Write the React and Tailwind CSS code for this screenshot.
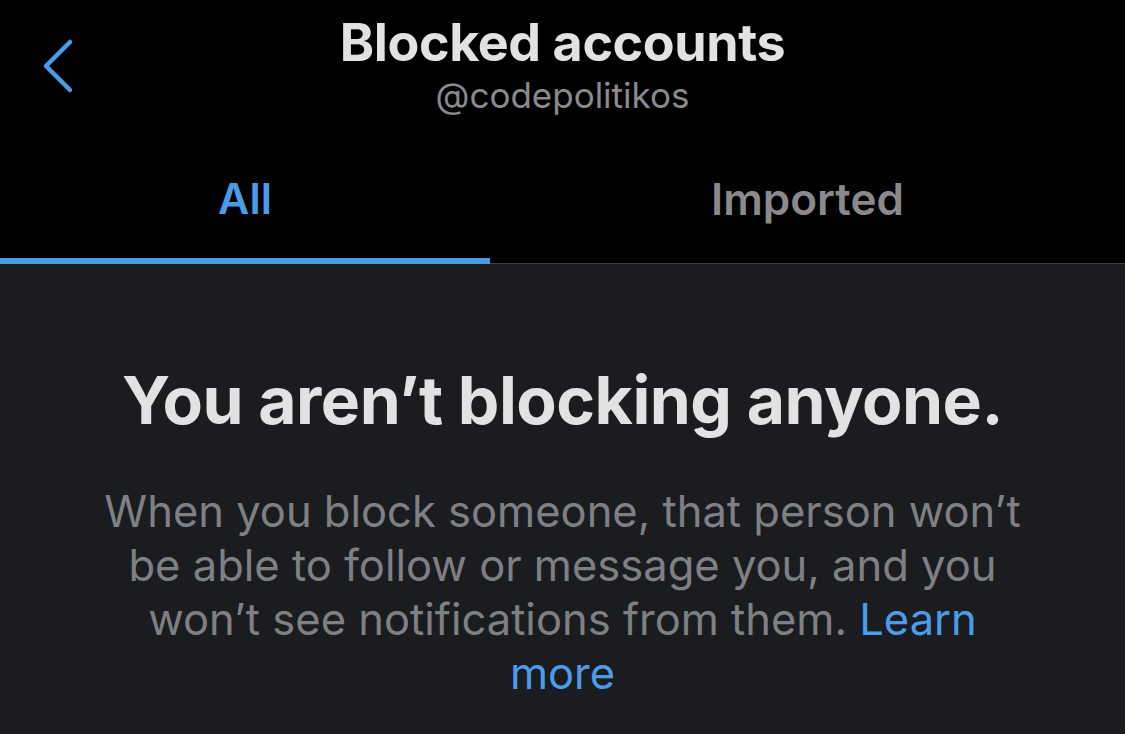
export default function App() {
    return (
        <div className="w-[1125px] h-[734px] overflow-hidden bg-[#1b1c20] font-['Inter','Noto_Sans',sans-serif]">
            {/* header */}
            <div className="bg-black">
                <div className="relative h-[132px] flex flex-col items-center">
                    <button className="absolute left-[40px] top-[38px] text-[#4a9be8]">
                        <svg width="36" height="56" viewBox="0 0 36 56" fill="none">
                            <path d="M30 4 L6 28 L30 52" stroke="currentColor" strokeWidth="4.5" strokeLinecap="round" strokeLinejoin="round" />
                        </svg>
                    </button>
                    <h1 className="mt-[12px] text-[52px] leading-[62px] font-bold text-[#e2e2e2] tracking-[-0.4px]">Blocked accounts</h1>
                    <p className="text-[35px] leading-[42px] text-[#8a8a8e]">@codepolitikos</p>
                </div>
                <div className="flex h-[132px] border-b border-[#3b3b3d]">
                    <div className="relative w-[490px] flex items-center justify-center">
                        <span className="mt-[2px] text-[43px] font-semibold text-[#4a9be8]">All</span>
                        <div className="absolute left-0 right-0 bottom-[-1px] h-[6px] bg-[#4a9be8]" />
                    </div>
                    <div className="flex-1 flex items-center justify-center">
                        <span className="mt-[2px] text-[44px] font-semibold text-[#8a8a8e]">Imported</span>
                    </div>
                </div>
            </div>

            {/* empty state */}
            <div className="flex flex-col items-center pt-[96px] text-center">
                <h2 className="text-[66px] leading-[80px] font-bold text-[#e2e2e2] tracking-[-0.5px] whitespace-nowrap">You aren’t blocking anyone.</h2>
                <p className="mt-[44px] text-[43.5px] leading-[54px] text-[#7f8085] whitespace-nowrap">
                    When you block someone, that person won’t<br />
                    be able to follow or message you, and you<br />
                    won’t see notifications from them. <span className="text-[#4b9cea]">Learn</span><br />
                    <span className="text-[#4b9cea]">more</span>
                </p>
            </div>
        </div>
    )
}
